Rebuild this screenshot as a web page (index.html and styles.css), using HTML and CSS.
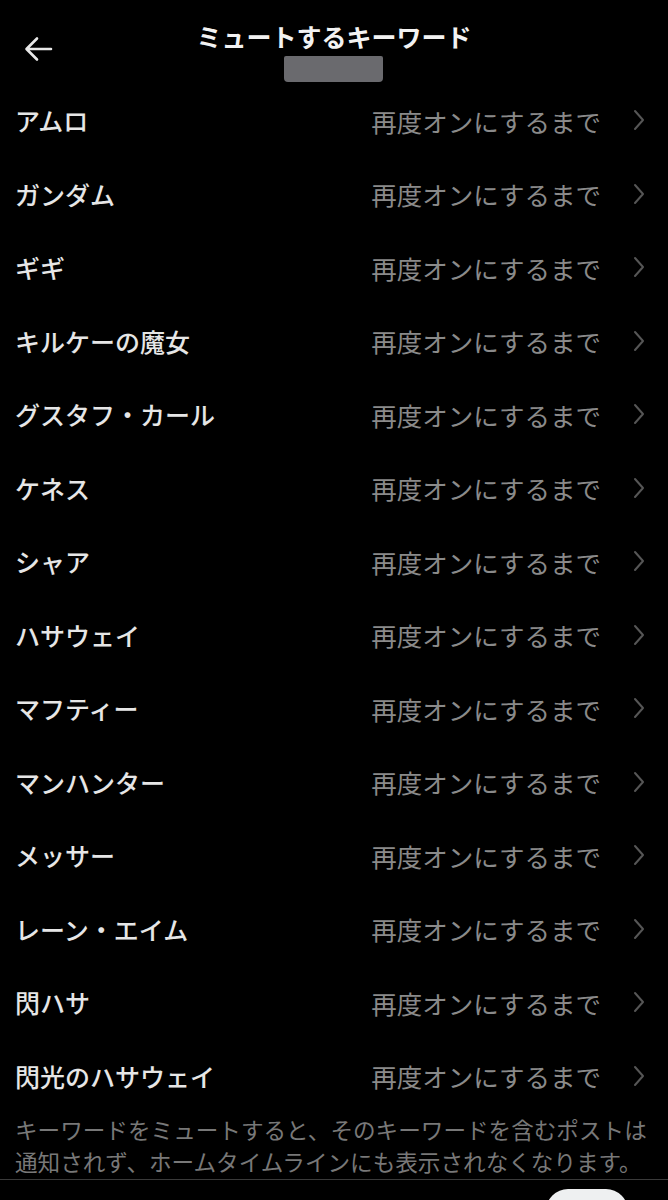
FILE: index.html
```html
<!DOCTYPE html>
<html lang="ja">
<head>
<meta charset="utf-8">
<title>ミュートするキーワード</title>
<link rel="stylesheet" href="styles.css">
</head>
<body>
<div class="page">
  <header class="header">
    <div class="back">
      <svg width="30" height="26" viewBox="0 0 30 26"><path d="M28 13H4M14 2.5L3.5 13L14 23.5" fill="none" stroke="#e8e8e8" stroke-width="2.6" stroke-linecap="round" stroke-linejoin="round"/></svg>
    </div>
    <div class="title-block">
      <div class="title">ミュートするキーワード</div>
      <div class="redact"></div>
    </div>
    <div></div>
  </header>
  <ul class="list">
    <li class="row"><span class="kw">アムロ</span><span class="dur">再度オンにするまで</span><svg class="chev" width="14" height="24" viewBox="0 0 14 24"><path d="M3 3L11 12L3 21" fill="none" stroke="#565656" stroke-width="2" stroke-linecap="round" stroke-linejoin="round"/></svg></li>
    <li class="row"><span class="kw">ガンダム</span><span class="dur">再度オンにするまで</span><svg class="chev" width="14" height="24" viewBox="0 0 14 24"><path d="M3 3L11 12L3 21" fill="none" stroke="#565656" stroke-width="2" stroke-linecap="round" stroke-linejoin="round"/></svg></li>
    <li class="row"><span class="kw">ギギ</span><span class="dur">再度オンにするまで</span><svg class="chev" width="14" height="24" viewBox="0 0 14 24"><path d="M3 3L11 12L3 21" fill="none" stroke="#565656" stroke-width="2" stroke-linecap="round" stroke-linejoin="round"/></svg></li>
    <li class="row"><span class="kw">キルケーの魔女</span><span class="dur">再度オンにするまで</span><svg class="chev" width="14" height="24" viewBox="0 0 14 24"><path d="M3 3L11 12L3 21" fill="none" stroke="#565656" stroke-width="2" stroke-linecap="round" stroke-linejoin="round"/></svg></li>
    <li class="row"><span class="kw">グスタフ・カール</span><span class="dur">再度オンにするまで</span><svg class="chev" width="14" height="24" viewBox="0 0 14 24"><path d="M3 3L11 12L3 21" fill="none" stroke="#565656" stroke-width="2" stroke-linecap="round" stroke-linejoin="round"/></svg></li>
    <li class="row"><span class="kw">ケネス</span><span class="dur">再度オンにするまで</span><svg class="chev" width="14" height="24" viewBox="0 0 14 24"><path d="M3 3L11 12L3 21" fill="none" stroke="#565656" stroke-width="2" stroke-linecap="round" stroke-linejoin="round"/></svg></li>
    <li class="row"><span class="kw">シャア</span><span class="dur">再度オンにするまで</span><svg class="chev" width="14" height="24" viewBox="0 0 14 24"><path d="M3 3L11 12L3 21" fill="none" stroke="#565656" stroke-width="2" stroke-linecap="round" stroke-linejoin="round"/></svg></li>
    <li class="row"><span class="kw">ハサウェイ</span><span class="dur">再度オンにするまで</span><svg class="chev" width="14" height="24" viewBox="0 0 14 24"><path d="M3 3L11 12L3 21" fill="none" stroke="#565656" stroke-width="2" stroke-linecap="round" stroke-linejoin="round"/></svg></li>
    <li class="row"><span class="kw">マフティー</span><span class="dur">再度オンにするまで</span><svg class="chev" width="14" height="24" viewBox="0 0 14 24"><path d="M3 3L11 12L3 21" fill="none" stroke="#565656" stroke-width="2" stroke-linecap="round" stroke-linejoin="round"/></svg></li>
    <li class="row"><span class="kw">マンハンター</span><span class="dur">再度オンにするまで</span><svg class="chev" width="14" height="24" viewBox="0 0 14 24"><path d="M3 3L11 12L3 21" fill="none" stroke="#565656" stroke-width="2" stroke-linecap="round" stroke-linejoin="round"/></svg></li>
    <li class="row"><span class="kw">メッサー</span><span class="dur">再度オンにするまで</span><svg class="chev" width="14" height="24" viewBox="0 0 14 24"><path d="M3 3L11 12L3 21" fill="none" stroke="#565656" stroke-width="2" stroke-linecap="round" stroke-linejoin="round"/></svg></li>
    <li class="row"><span class="kw">レーン・エイム</span><span class="dur">再度オンにするまで</span><svg class="chev" width="14" height="24" viewBox="0 0 14 24"><path d="M3 3L11 12L3 21" fill="none" stroke="#565656" stroke-width="2" stroke-linecap="round" stroke-linejoin="round"/></svg></li>
    <li class="row"><span class="kw">閃ハサ</span><span class="dur">再度オンにするまで</span><svg class="chev" width="14" height="24" viewBox="0 0 14 24"><path d="M3 3L11 12L3 21" fill="none" stroke="#565656" stroke-width="2" stroke-linecap="round" stroke-linejoin="round"/></svg></li>
    <li class="row"><span class="kw">閃光のハサウェイ</span><span class="dur">再度オンにするまで</span><svg class="chev" width="14" height="24" viewBox="0 0 14 24"><path d="M3 3L11 12L3 21" fill="none" stroke="#565656" stroke-width="2" stroke-linecap="round" stroke-linejoin="round"/></svg></li>
  </ul>
  <p class="note">キーワードをミュートすると、そのキーワードを含むポストは<br>通知されず、ホームタイムラインにも表示されなくなります。</p>
  <div class="bottom">
    <div class="fab"></div>
  </div>
</div>
</body>
</html>
```

FILE: styles.css
```css
html, body {
  margin: 0;
  padding: 0;
  background: #000;
}
body {
  font-family: "Noto Sans CJK JP", "Noto Sans", sans-serif;
  color: #e8e8e8;
  height: 1200px;
  overflow: hidden;
}
.page {
  width: 668px;
}
.header {
  display: grid;
  grid-template-columns: 1fr auto 1fr;
  height: 85px;
}
.back {
  padding-left: 23px;
  padding-top: 36px;
}
.back svg {
  display: block;
}
.title-block {
  display: flex;
  flex-direction: column;
  align-items: center;
  padding-top: 20px;
}
.title {
  font-size: 25px;
  font-weight: 700;
  line-height: 32px;
  color: #f2f2f2;
}
.redact {
  width: 99px;
  height: 26px;
  margin-top: 4px;
  background: #6a6a6e;
  border-radius: 2px 2px 4px 4px;
}
.list {
  list-style: none;
  margin: 0;
  padding: 0;
}
.row {
  display: flex;
  align-items: center;
  height: 73.5px;
  padding: 0 22px 3px 15px;
  box-sizing: border-box;
}
.kw {
  flex: 1;
  font-size: 25px;
  font-weight: 500;
  color: #e6e6e6;
  white-space: nowrap;
}
.dur {
  font-size: 25.5px;
  color: #8a8a8a;
  white-space: nowrap;
  margin-right: 31px;
}
.chev {
  display: block;
}
.note {
  margin: 0;
  padding: 0 0 1px 15px;
  font-size: 22.6px;
  line-height: 32px;
  color: #787878;
  white-space: nowrap;
  border-bottom: 1px solid #3a3a3a;
}
.bottom {
  display: flex;
  justify-content: flex-end;
  padding: 9px 40px 0 0;
}
.fab {
  width: 82px;
  height: 50px;
  background: #eef0f1;
  border-radius: 22px;
}
```
